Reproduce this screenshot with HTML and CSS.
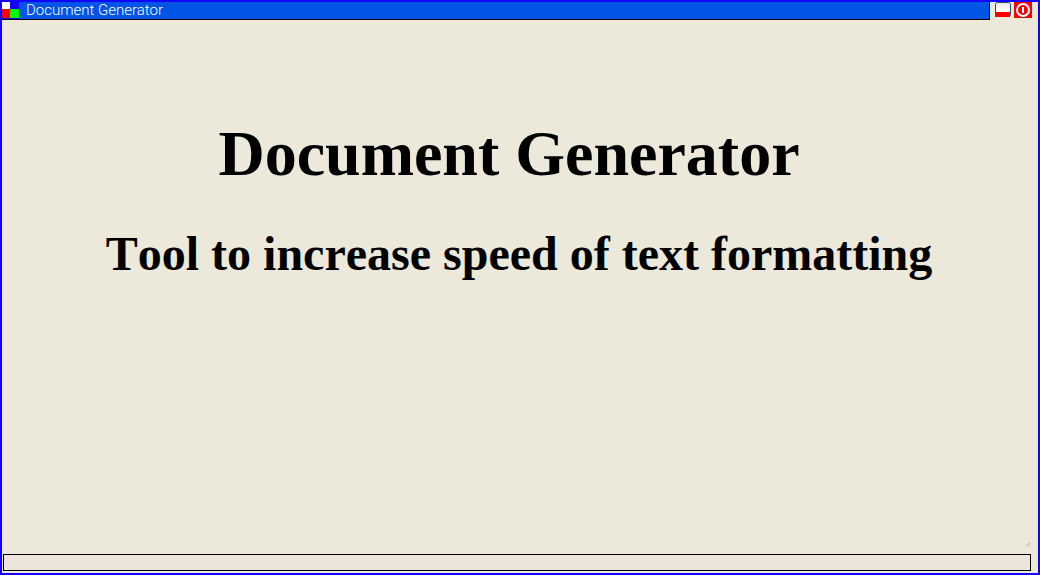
FILE: index.html
```html
<!DOCTYPE html>
<html lang="en">
<head>
    <meta charset="utf-8">
    <title>Document Generator</title>
    <link rel="stylesheet" href="styles.css">
</head>
<body>
    <div class="window">
        <header class="top">
            <div class="title-bar">
                <svg class="logo" width="17" height="17" viewBox="0 0 17 17" shape-rendering="crispEdges" aria-hidden="true">
                    <rect width="17" height="17" fill="#1400ff"/>
                    <rect width="8" height="7" fill="#fff"/>
                    <rect y="7" width="8" height="9" fill="#f00"/>
                    <rect x="8" y="7" width="9" height="9" fill="#0f0"/>
                </svg>
                <span class="title">Document Generator</span>
            </div>
            <div class="controls">
                <button class="control" type="button" aria-label="Minimize">
                    <svg width="16" height="17" viewBox="0 0 16 17">
                        <defs>
                            <linearGradient id="shade" x1="0" y1="0" x2="0" y2="1">
                                <stop offset="0" stop-color="#e6e4de"/>
                                <stop offset="0.6" stop-color="#fff"/>
                            </linearGradient>
                        </defs>
                        <rect x="0.5" y="0.5" width="15" height="14" rx="2" fill="url(#shade)" stroke="#245078"/>
                        <path d="M0 10h15v5H0z" fill="#f00"/>
                    </svg>
                </button>
                <button class="control" type="button" aria-label="Close">
                    <svg width="18" height="17" viewBox="0 0 18 17">
                        <rect width="18" height="16" fill="#f00"/>
                        <path d="M7 15h4" stroke="#245078" stroke-width="1"/>
                        <circle cx="9" cy="8" r="6" fill="none" stroke="#fff" stroke-width="2"/>
                        <path d="M9 5v6" stroke="#fff" stroke-width="2"/>
                    </svg>
                </button>
            </div>
        </header>
        <main class="content">
            <h1>Document Generator</h1>
            <h2>Tool to increase speed of text formatting</h2>
        </main>
        <footer class="bottom">
            <svg class="grip" width="6" height="6" viewBox="0 0 6 6" aria-hidden="true">
                <path d="M2 5L5 2" stroke="#c8c8bc" stroke-width="2"/>
            </svg>
            <div class="status-bar" role="status"></div>
        </footer>
    </div>
</body>
</html>
```
FILE: styles.css
```css
* {
    box-sizing: border-box;
}

body {
    margin: 0;
    background-color: #ece9da;
}

.window {
    display: flex;
    flex-direction: column;
    min-height: 100vh;
    border: 2px solid #1400ff;
}

.top {
    display: flex;
    align-items: flex-start;
    gap: 5px;
    padding-right: 6px;
}

.title-bar {
    display: flex;
    flex: 1;
    gap: 7px;
    height: 18px;
    background-color: #0054e6;
    border-right: 1px solid #000;
    border-bottom: 1px solid #000;
}

.title {
    color: #fff;
    font-family: Roboto, "Liberation Sans", Arial, sans-serif;
    font-size: 15px;
    font-weight: 300;
    line-height: 16px;
}

.controls {
    display: flex;
    gap: 3px;
}

.control {
    padding: 0;
    border: none;
    background: none;
    cursor: pointer;
}

.control svg {
    display: block;
}

.content {
    flex: 1;
    padding: 98px 22px 0 0;
    font-family: "Liberation Serif", "Times New Roman", serif;
    font-kerning: none;
    text-align: center;
}

h1 {
    margin: 0 0 36px;
    font-size: 64px;
    line-height: 72px;
}

h2 {
    margin: 0 -20px 0 0;
    font-size: 48px;
    line-height: 56px;
}

.bottom {
    display: flex;
    flex-direction: column;
    gap: 7px;
    padding: 0 7px 2px 1px;
}

.grip {
    align-self: flex-end;
}

.status-bar {
    height: 17px;
    background-color: #ece6da;
    border: 1px solid #000;
}
```
